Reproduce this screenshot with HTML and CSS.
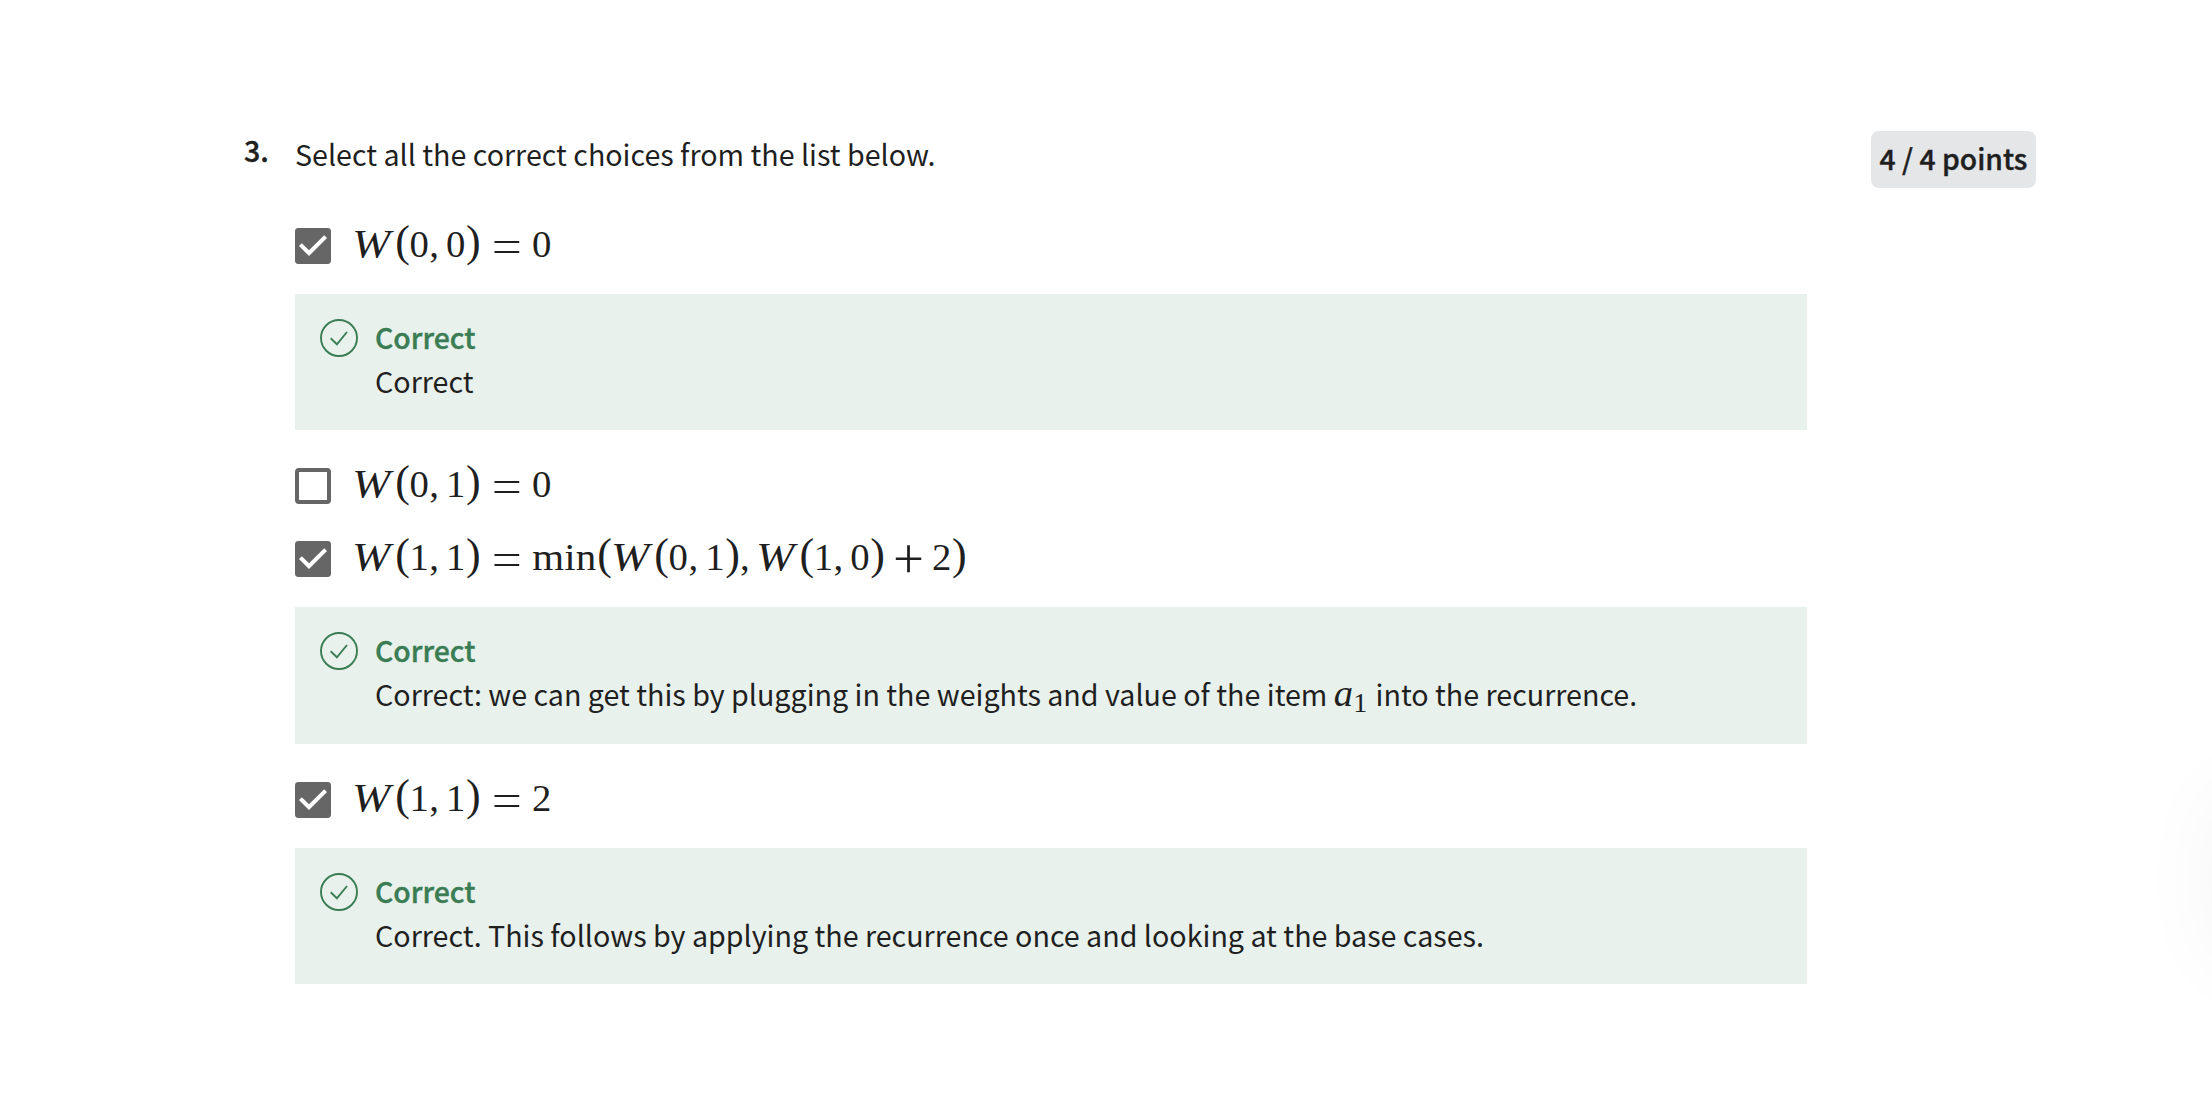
FILE: index.html
```html
<!DOCTYPE html>
<html lang="en">
<head>
<meta charset="utf-8">
<title>Quiz question</title>
<link rel="stylesheet" href="styles.css">
</head>
<body>
<svg class="defs" width="0" height="0" aria-hidden="true">
  <symbol id="box-checked" viewBox="3 3 18 18"><rect x="3" y="3" width="18" height="18" rx="1.7" fill="#666"/><path d="M10 17l-5-5 1.41-1.41L10 14.17l7.59-7.59L19 8z" fill="#fff"/></symbol>
  <symbol id="box-empty" viewBox="0 0 36 36"><rect x="2" y="2" width="32" height="32" rx="2" fill="#fff" stroke="#666" stroke-width="4"/></symbol>
  <symbol id="ok" viewBox="0 0 38 38"><g fill="none" stroke="#3a7d55" stroke-width="1.9"><circle cx="19" cy="19" r="18"/><path d="M10.7 19.3l6.2 6L27 13"/></g></symbol>
</svg>
<main class="question">
  <div class="number">3.</div>
  <section class="content">
    <p class="prompt">Select all the correct choices from the list below.</p>

    <div class="option">
      <svg class="box"><use href="#box-checked"/></svg>
      <div class="math"><i class="w">W</i><b class="p">(</b><b class="d">0</b><b class="c">,</b><b class="d">0</b><b class="p">)</b><b class="rel">=</b><b class="d">0</b></div>
    </div>
    <div class="feedback">
      <svg class="ok"><use href="#ok"/></svg>
      <div><h3>Correct</h3><p>Correct</p></div>
    </div>

    <div class="option">
      <svg class="box"><use href="#box-empty"/></svg>
      <div class="math"><i class="w">W</i><b class="p">(</b><b class="d">0</b><b class="c">,</b><b class="d">1</b><b class="p">)</b><b class="rel">=</b><b class="d">0</b></div>
    </div>

    <div class="option tight">
      <svg class="box"><use href="#box-checked"/></svg>
      <div class="math"><i class="w">W</i><b class="p">(</b><b class="d">1</b><b class="c">,</b><b class="d">1</b><b class="p">)</b><b class="rel">=</b><b class="fn">min</b><b class="p">(</b><i class="w">W</i><b class="p">(</b><b class="d">0</b><b class="c">,</b><b class="d">1</b><b class="p">)</b><b class="c">,</b><i class="w">W</i><b class="p">(</b><b class="d">1</b><b class="c">,</b><b class="d">0</b><b class="p">)</b><b class="bin">+</b><b class="d">2</b><b class="p">)</b></div>
    </div>
    <div class="feedback tall">
      <svg class="ok"><use href="#ok"/></svg>
      <div><h3>Correct</h3><p>Correct: we can get this by plugging in the weights and value of the item <span class="var"><i>a</i><small>1</small></span> into the recurrence.</p></div>
    </div>

    <div class="option">
      <svg class="box"><use href="#box-checked"/></svg>
      <div class="math"><i class="w">W</i><b class="p">(</b><b class="d">1</b><b class="c">,</b><b class="d">1</b><b class="p">)</b><b class="rel">=</b><b class="d">2</b></div>
    </div>
    <div class="feedback">
      <svg class="ok"><use href="#ok"/></svg>
      <div><h3>Correct</h3><p>Correct. This follows by applying the recurrence once and looking at the base cases.</p></div>
    </div>
  </section>
  <div class="points">4 / 4 points</div>
</main>
<div class="edge-shadow"></div>
</body>
</html>
```
FILE: styles.css
```css
* { box-sizing: border-box; }
body {
  margin: 0;
  width: 2212px;
  height: 1112px;
  position: relative;
  overflow: hidden;
  background: #fff;
  color: #1f1f1f;
  font: 400 28.65px/44px "Noto Sans CJK SC", "Noto Sans", sans-serif;
}
p, h3 { margin: 0; }
svg { display: block; flex: none; }
.defs { position: absolute; }
.question {
  display: flex;
  align-items: flex-start;
  padding: 131px 176px 0 244px;
}
.number {
  width: 51px;
  padding-top: 1px;
  font-weight: 500;
  line-height: 36px;
  -webkit-text-stroke: .4px currentColor;
}
.content { width: 1512px; padding-top: 1px; }
.prompt { margin-bottom: 52px; white-space: nowrap; }
.points {
  width: 165px;
  height: 57px;
  margin-left: auto;
  border-radius: 8px;
  background: #e5e6e8;
  font-size: 28.3px;
  font-weight: 500;
  line-height: 54px;
  text-align: center;
  white-space: nowrap;
  -webkit-text-stroke: .4px currentColor;
}
.option { display: flex; height: 36px; margin-top: 38px; }
.prompt + .option { margin-top: 0; }
.option.tight { margin-top: 37px; }
.box { width: 36px; height: 36px; margin-right: 22px; }
.feedback {
  display: flex;
  height: 136px;
  margin-top: 30px;
  padding: 21px 0 0 25px;
  background: #e8f1ec;
}
.feedback.tall { height: 137px; }
.ok { width: 38px; height: 38px; margin: 4px 17px 0 0; }
.feedback h3 {
  font-size: 28.4px;
  font-weight: 500;
  color: #3a7d55;
  -webkit-text-stroke: .4px currentColor;
}
.feedback p { height: 44px; white-space: nowrap; }

/* Formula glyphs sit in fixed advances so that every row shares one rhythm */
.math {
  display: flex;
  align-items: baseline;
  height: 36px;
  margin-top: -3px;
  font: 38.72px/36px "Liberation Serif", serif;
}
.math b { font-weight: 400; text-align: center; }
.math .w {
  width: 41.96px;
  font-size: 39px;
  transform: translateX(-1px) scaleX(1.18);
  transform-origin: left;
}
.math .p { width: 15.06px; font-size: 44px; transform: translateY(-1px); }
.math .d { width: 19.36px; transform: translateX(-.5px); }
.math .c { width: 17.2px; text-align: left; }
.math .fn { width: 64.5px; transform: translateX(-1px) scaleX(1.06); }
.math .rel {
  width: 51.6px;
  font: 300 44px/0 "Noto Sans CJK SC", sans-serif;
  transform: translateY(6px) scaleX(1.22);
}
.math .bin {
  width: 47.3px;
  font: 300 48px/0 "Noto Sans CJK SC", sans-serif;
  transform: translateY(6px) scale(1.15);
}
.var {
  display: inline-block;
  margin-right: 2px;
  line-height: 30px;
  font-family: "Liberation Serif", serif;
}
.var i { font-size: 38.7px; }
.var small { font-size: 28px; position: relative; top: 6px; }

.edge-shadow {
  position: absolute;
  left: 2212px;
  top: 790px;
  width: 100px;
  height: 176px;
  border-radius: 30px;
  box-shadow: 0 0 84px rgba(0, 0, 0, .045);
}
```
